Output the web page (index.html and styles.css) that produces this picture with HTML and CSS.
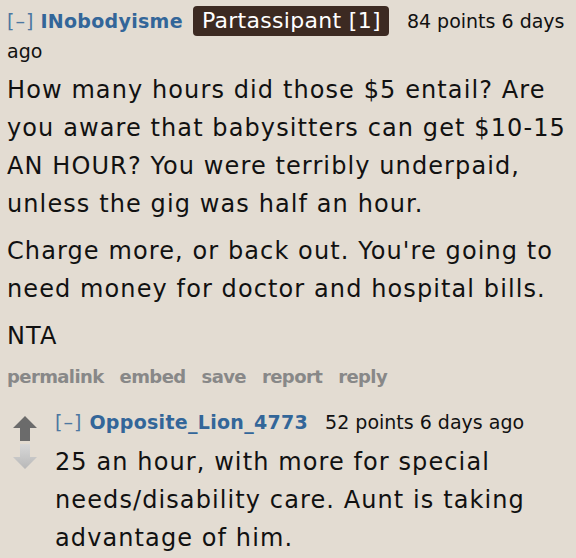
FILE: index.html
```html
<!DOCTYPE html>
<html>
<head>
<meta charset="utf-8">
<link rel="stylesheet" href="styles.css">
</head>
<body>
<div class="comment">
  <p class="tagline">
    <span class="expand">[–]</span>
    <span class="author">INobodyisme</span>
    <span class="flair">Partassipant [1]</span>
    <span class="score">84 points</span> <span class="time">6 days ago</span>
  </p>
  <div class="usertext">
    <p>How many hours did those $5 entail? Are you aware that babysitters can get $10-15 AN HOUR? You were terribly underpaid, unless the gig was half an hour.</p>
    <p>Charge more, or back out. You're going to need money for doctor and hospital bills.</p>
    <p>NTA</p>
  </div>
  <ul class="buttons">
    <li>permalink</li>
    <li>embed</li>
    <li>save</li>
    <li>report</li>
    <li>reply</li>
  </ul>
  <div class="child">
    <div class="midcol">
      <svg class="arrow" width="26" height="26" viewBox="0 0 26 26"><path d="M13 1 L25 13 L18 13 L18 26 L8 26 L8 13 L1 13 Z" fill="#6b6b6b"/></svg>
      <svg class="arrow" width="26" height="26" viewBox="0 0 26 26"><defs><linearGradient id="g" x1="0" y1="0" x2="0" y2="1"><stop offset="0" stop-color="#d8d8d8"/><stop offset="1" stop-color="#b8b8b8"/></linearGradient></defs><path d="M13 25 L25 13 L18 13 L18 0 L8 0 L8 13 L1 13 Z" fill="url(#g)"/></svg>
    </div>
    <div class="entry">
      <p class="tagline">
        <span class="expand">[–]</span>
        <span class="author">Opposite_Lion_4773</span>
        <span class="score">52 points</span> <span class="time">6 days ago</span>
      </p>
      <div class="usertext">
        <p>25 an hour, with more for special needs/disability care. Aunt is taking advantage of him.</p>
      </div>
    </div>
  </div>
</div>
</body>
</html>
```
FILE: styles.css
```css
html, body {
  margin: 0;
  padding: 0;
  background: #e3dcd2;
}
body {
  font-family: Verdana, "DejaVu Sans", sans-serif;
  color: #111;
  padding: 0 7px;
}
.comment p { margin: 0; }
.tagline {
  font-size: 19px;
  line-height: 30px;
  padding-top: 6px;
}
.expand {
  color: #336699;
  opacity: 0.85;
  letter-spacing: 1px;
}
.author {
  color: #336699;
  font-weight: bold;
  letter-spacing: 0.3px;
  margin-left: 0;
  margin-right: 4px;
}
.flair {
  display: inline-block;
  background: #3c2a22;
  color: #fff;
  font-size: 22px;
  letter-spacing: 0.3px;
  line-height: 30px;
  padding: 0 8px 0 9px;
  border-radius: 4px;
  margin-right: 12px;
  vertical-align: top;
}
.usertext {
  margin-top: 5px;
}
.usertext p {
  font-size: 24px;
  letter-spacing: 1.1px;
  line-height: 38px;
  margin: 0 0 9px 0;
}
.buttons {
  list-style: none;
  margin: 0;
  padding: 0;
  display: flex;
  gap: 16px;
  font-size: 18px;
  letter-spacing: -0.6px;
  font-weight: bold;
  color: #888;
  line-height: 30px;
  margin-top: -2px;
}
.child {
  display: flex;
  margin-top: 15px;
}
.midcol {
  flex: none;
  width: 48px;
  display: flex;
  flex-direction: column;
  padding-left: 5px;
  padding-top: 8px;
  gap: 3px;
  box-sizing: border-box;
}
.child .tagline {
  padding-top: 0;
}
.child .author {
  margin-left: 1px;
  margin-right: 11px;
}
.child .usertext {
  margin-top: 6px;
}
```
